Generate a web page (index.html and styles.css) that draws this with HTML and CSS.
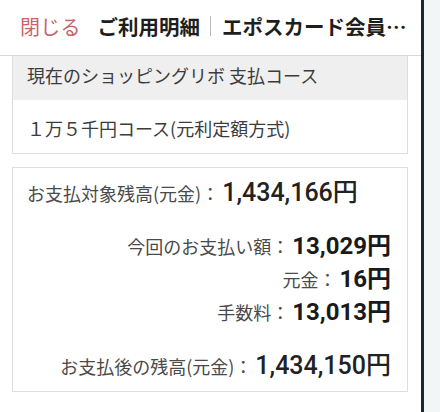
FILE: index.html
```html
<!DOCTYPE html>
<html lang="ja">
<head>
<meta charset="utf-8">
<link rel="stylesheet" href="styles.css">
</head>
<body>
<div class="page">
  <div class="app">
    <header class="topbar">
      <span class="close">閉じる</span>
      <span class="title">ご利用明細<span class="sep"></span>エポスカード会員…</span>
    </header>
    <section class="card course">
      <div class="course-head">現在のショッピングリボ 支払コース</div>
      <div class="course-body">１万５千円コース(元利定額方式)</div>
    </section>
    <section class="card summary">
      <div class="row left"><span class="label">お支払対象残高(元金)：</span><span class="amt medium">1,434,166円</span></div>
      <div class="row r-pay"><span class="label">今回のお支払い額：</span><span class="amt">13,029円</span></div>
      <div class="row"><span class="label">元金：</span><span class="amt">16円</span></div>
      <div class="row"><span class="label">手数料：</span><span class="amt">13,013円</span></div>
      <div class="row r-after"><span class="label">お支払後の残高(元金)：</span><span class="amt medium">1,434,150円</span></div>
    </section>
  </div>
  <div class="bezel"></div>
  <div class="outside"></div>
</div>
</body>
</html>
```
FILE: styles.css
```css
html, body {
  margin: 0;
  padding: 0;
  background: #ffffff;
}
body {
  font-family: "Noto Sans CJK JP", "Noto Sans", sans-serif;
}
.page {
  display: flex;
  width: 440px;
  height: 412px;
  overflow: hidden;
}
.app {
  width: 421px;
  background: #ffffff;
  display: flex;
  flex-direction: column;
}
.bezel {
  width: 3px;
  background: #1c2731;
}
.outside {
  flex: 1;
  background: #f2f6f6;
}
.topbar {
  height: 56px;
  box-sizing: border-box;
  border-bottom: 1px solid #d9d9d9;
  display: flex;
  align-items: center;
  padding-left: 20px;
  padding-bottom: 3px;
  white-space: nowrap;
}
.close {
  font-size: 20px;
  color: #c9636c;
  letter-spacing: 0.2px;
}
.title {
  margin-left: 17px;
  font-size: 20.5px;
  font-weight: 700;
  color: #1e1e1e;
  display: flex;
  align-items: center;
}
.sep {
  display: inline-block;
  width: 1px;
  height: 20px;
  background: #b8b8b8;
  margin: 0 11px 0 10px;
}
.card {
  margin: 0 13px 0 12px;
  border: 1px solid #dedede;
}
.course {
  border-top: none;
}
.course-head {
  height: 44px;
  box-sizing: border-box;
  background: #efefef;
  display: flex;
  align-items: center;
  padding-left: 14px;
  padding-bottom: 7px;
  font-size: 18px;
  color: #3c3c3c;
}
.course-body {
  height: 53px;
  box-sizing: border-box;
  display: flex;
  align-items: center;
  padding-left: 14px;
  padding-top: 3px;
  font-size: 18px;
  color: #3c3c3c;
}
.summary {
  margin-top: 13px;
  height: 225px;
  box-sizing: border-box;
  padding: 8px 16px 0 14px;
  display: flex;
  flex-direction: column;
}
.row {
  display: flex;
  justify-content: flex-end;
  align-items: baseline;
  height: 33px;
  line-height: 33px;
}
.row.left {
  justify-content: flex-start;
}
.r-pay {
  margin-top: 21px;
}
.r-after {
  margin-top: 20px;
}
.label {
  font-size: 18px;
  color: #4a4a4a;
}
.amt {
  margin-left: 3px;
  font-family: "Roboto", "Liberation Sans", "Noto Sans CJK JP", sans-serif;
  font-size: 24px;
  font-weight: 700;
  color: #1a1a1a;
}
.amt.medium {
  font-size: 25px;
  font-weight: 500;
  color: #222222;
}
```
